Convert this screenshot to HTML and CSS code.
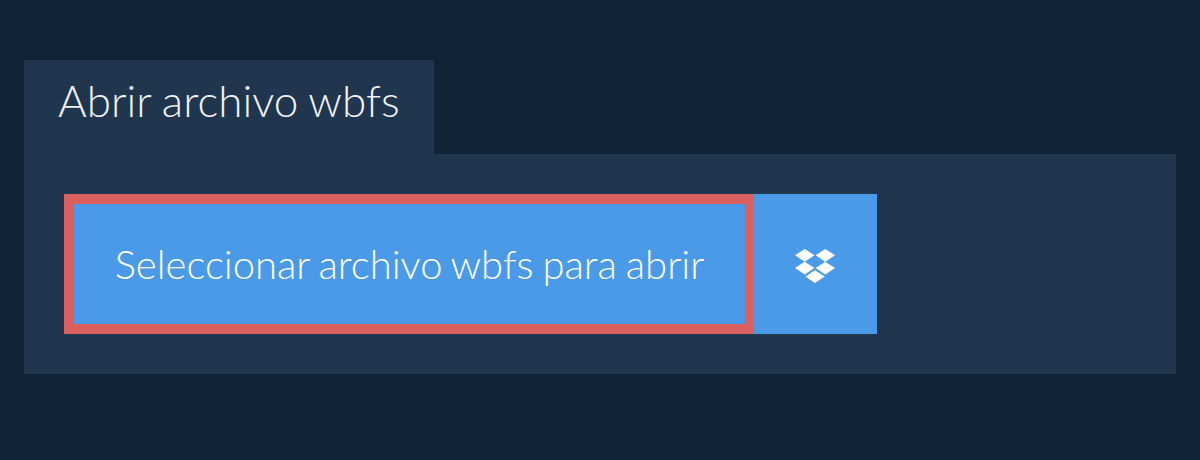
FILE: index.html
```html
<!DOCTYPE html>
<html lang="es">
<head>
	<meta charset="UTF-8">
	<title>Abrir archivo wbfs</title>
	<link rel="stylesheet" href="styles.css">
</head>
<body>
	<div class="tab">Abrir archivo wbfs</div>
	<div class="panel">
		<button class="select-file">Seleccionar archivo wbfs para abrir</button>
		<button class="dropbox" aria-label="Dropbox">
			<svg class="dropbox-icon" viewBox="0 0 40 34" width="40" height="34">
				<path fill="#fff" d="M9.7 0 19.4 6.3 9.7 12.7 0 6.3ZM30.3 0 40 6.3 30.3 12.7 20.6 6.3ZM0 19 9.7 12.7 19.4 19 9.7 25.4 0 19ZM30.3 12.7 40 19 30.3 25.4 20.6 19ZM20 21.2 29.7 27.6 20 34 10.3 27.6Z"/>
			</svg>
		</button>
	</div>
</body>
</html>
```

FILE: styles.css
```css
* {
	box-sizing: border-box;
}

body {
	margin: 0;
	padding: 60px 24px 0;
	background: #102438;
	font-family: "Lato", sans-serif;
	font-weight: 300;
	color: #fff;
}

.tab {
	width: 410px;
	height: 94px;
	padding: 14px 0 0 34px;
	background: #20364f;
	font-size: 44px;
	line-height: 52px;
	word-spacing: -1px;
	color: #f0f2f4;
}

.panel {
	display: flex;
	height: 220px;
	padding: 40px;
	background: #20364f;
}

.select-file {
	width: 689px;
	height: 140px;
	border: solid #dd5e5e;
	border-width: 10px 8px 10px 10px;
	padding: 0;
	background: #4a9ae8;
	color: #fff;
	font: inherit;
	font-size: 40px;
	word-spacing: -2px;
}

.dropbox {
	display: flex;
	align-items: center;
	justify-content: center;
	width: 124px;
	height: 140px;
	border: 0;
	padding: 4px 0 0;
	background: #4a9ae8;
}
```
